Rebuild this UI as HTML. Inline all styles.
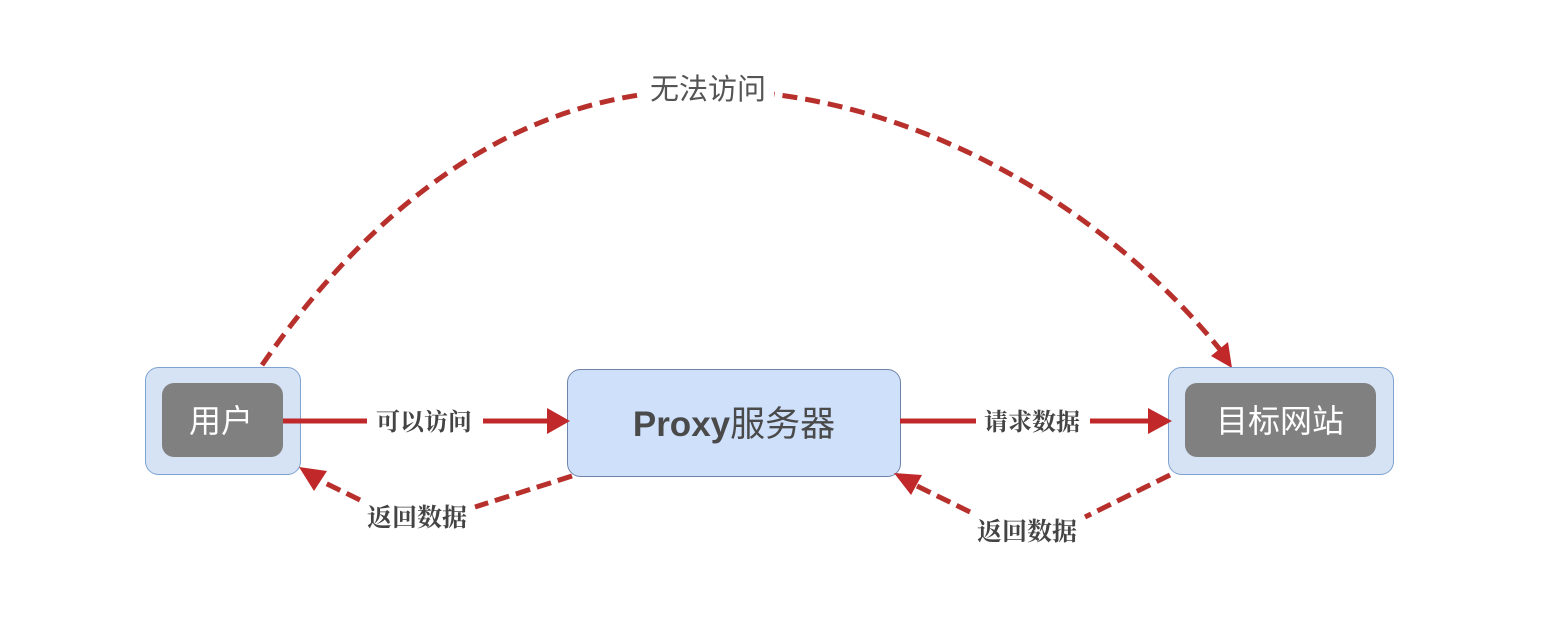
<!DOCTYPE html>
<html><head><meta charset="utf-8"><style>
html,body{margin:0;padding:0;background:#fff;}
svg{display:block}
text{font-family:"Liberation Sans","Noto Sans CJK SC",sans-serif;}
.lb{font-family:"Liberation Serif","Noto Serif CJK SC",serif;font-weight:bold;fill:#444}
</style></head><body>
<svg width="1568" height="627" viewBox="0 0 1568 627" xmlns="http://www.w3.org/2000/svg">
<path d="M262,365 C390,180 540,92 700,90 C900,88 1100,200 1222,352" fill="none" stroke="#b8302c" stroke-width="5" stroke-dasharray="15,8"/>
<polygon points="1232,368 1211,356 1228,342" fill="#c0282a"/>
<rect x="642" y="68" width="132" height="40" fill="#fff"/>
<text x="708" y="99" font-size="29" fill="#555" text-anchor="middle" font-family="Liberation Serif, Noto Serif CJK SC, serif">无法访问</text>

<rect x="145.5" y="367.5" width="155" height="107" rx="13" fill="#d5e3f4" stroke="#7ea3d0"/>
<rect x="162" y="383" width="121" height="74" rx="12" fill="#808080"/>
<text x="221" y="432" font-size="32" fill="#fff" text-anchor="middle">用户</text>

<rect x="567.5" y="369.5" width="333" height="107" rx="13" fill="#cfe0fb" stroke="#6f84a8"/>
<text x="734" y="436" font-size="35" fill="#4a4a4a" text-anchor="middle"><tspan font-weight="bold">Proxy</tspan>服务器</text>

<rect x="1168.5" y="367.5" width="225" height="107" rx="13" fill="#d5e3f4" stroke="#7ea3d0"/>
<rect x="1185" y="383" width="191" height="74" rx="12" fill="#808080"/>
<text x="1280" y="432" font-size="32" fill="#fff" text-anchor="middle">目标网站</text>

<line x1="283" y1="421" x2="550" y2="421" stroke="#c0282a" stroke-width="5"/>
<polygon points="570,421 547,408 547,434" fill="#c0282a"/>
<rect x="367" y="404" width="116" height="34" fill="#fff"/>
<text class="lb" x="424" y="430" font-size="24" text-anchor="middle">可以访问</text>

<line x1="900" y1="421" x2="1150" y2="421" stroke="#c0282a" stroke-width="5"/>
<polygon points="1172,421 1148,408 1148,434" fill="#c0282a"/>
<rect x="976" y="404" width="114" height="34" fill="#fff"/>
<text class="lb" x="1032" y="430" font-size="24" text-anchor="middle">请求数据</text>

<path d="M572,476 L475,507 M360,500 L315,478" fill="none" stroke="#b8302c" stroke-width="5" stroke-dasharray="15,7"/>
<polygon points="299,467 327,471 314,491" fill="#c0282a"/>
<text class="lb" x="417" y="526" font-size="25" text-anchor="middle">返回数据</text>

<path d="M1170,475 L1085,517 M970,512 L915,485" fill="none" stroke="#b8302c" stroke-width="5" stroke-dasharray="15,7"/>
<polygon points="894,473 922,475 911,495" fill="#c0282a"/>
<text class="lb" x="1027" y="540" font-size="25" text-anchor="middle">返回数据</text>
</svg>
</body></html>
